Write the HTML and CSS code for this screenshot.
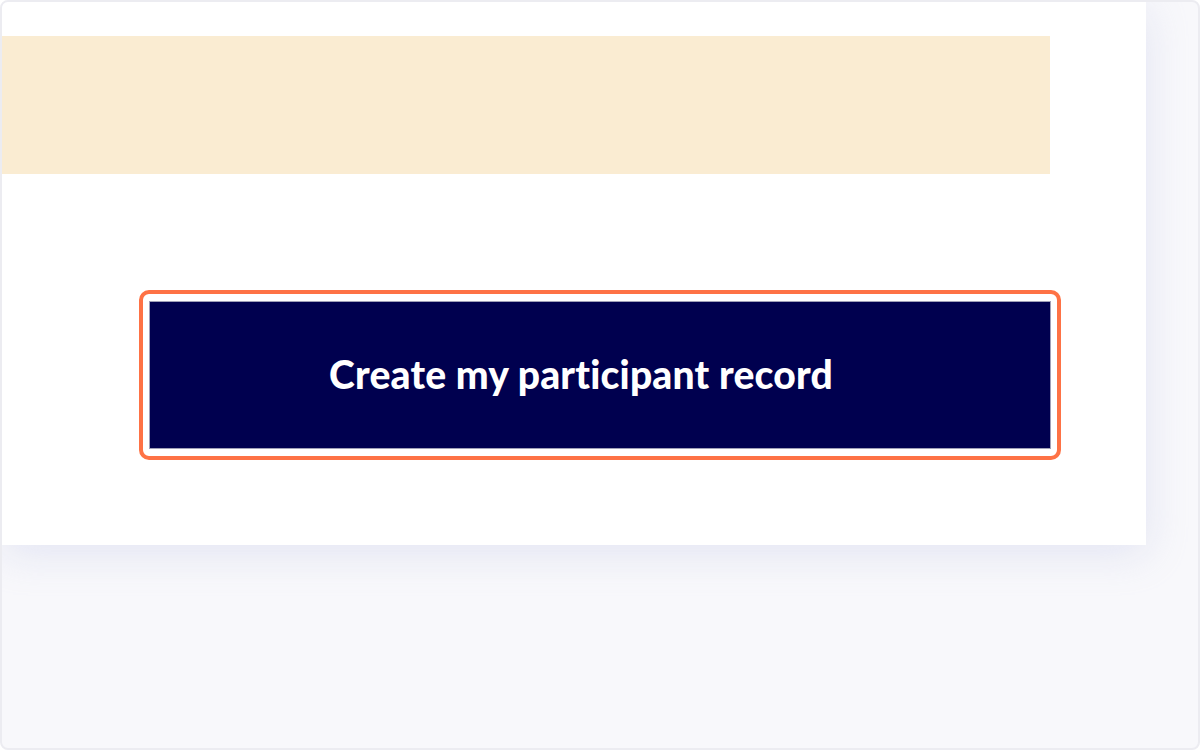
FILE: index.html
```html
<!DOCTYPE html>
<html lang="en">

<head>
    <meta charset="UTF-8" />
    <meta name="viewport" content="width=device-width, initial-scale=1.0" />
    <title>Create participant record</title>
    <link rel="stylesheet" href="styles.css">
</head>

<body>

    <div class="frame">
        <div class="card">
            <div class="notice"></div>

            <div class="highlight">
                <button class="submit-btn" type="button">Create my participant record</button>
            </div>
        </div>
    </div>

</body>

</html>
```

FILE: styles.css
```css
* {
    box-sizing: border-box;
}

body {
    margin: 0;
    font-family: Lato, "Noto Sans", sans-serif;
    background: #ffffff;
}

.frame {
    width: 1200px;
    height: 750px;
    border: 2px solid #ececf1;
    border-radius: 8px;
    background: #f8f8fb;
    overflow: hidden;
}

.card {
    width: 1144px;
    height: 543px;
    background: #ffffff;
    padding: 34px 0 0;
    box-shadow: 0 8px 40px rgba(200, 204, 232, 0.45);
}

.notice {
    width: 1048px;
    height: 138px;
    background: #faecd2;
}

.highlight {
    width: 922px;
    margin: 116px 0 0 137px;
    padding: 7px 6px;
    border: 4px solid #fe7245;
    border-radius: 10px;
}

.submit-btn {
    display: block;
    width: 902px;
    height: 148px;
    padding: 0 38px 2px 0;
    border: 1px solid #a0a0b8;
    background: #00004f;
    color: #ffffff;
    font-family: inherit;
    font-size: 39px;
    font-weight: 900;
    font-variant-ligatures: none;
    letter-spacing: 0.2px;
    cursor: pointer;
}
```
